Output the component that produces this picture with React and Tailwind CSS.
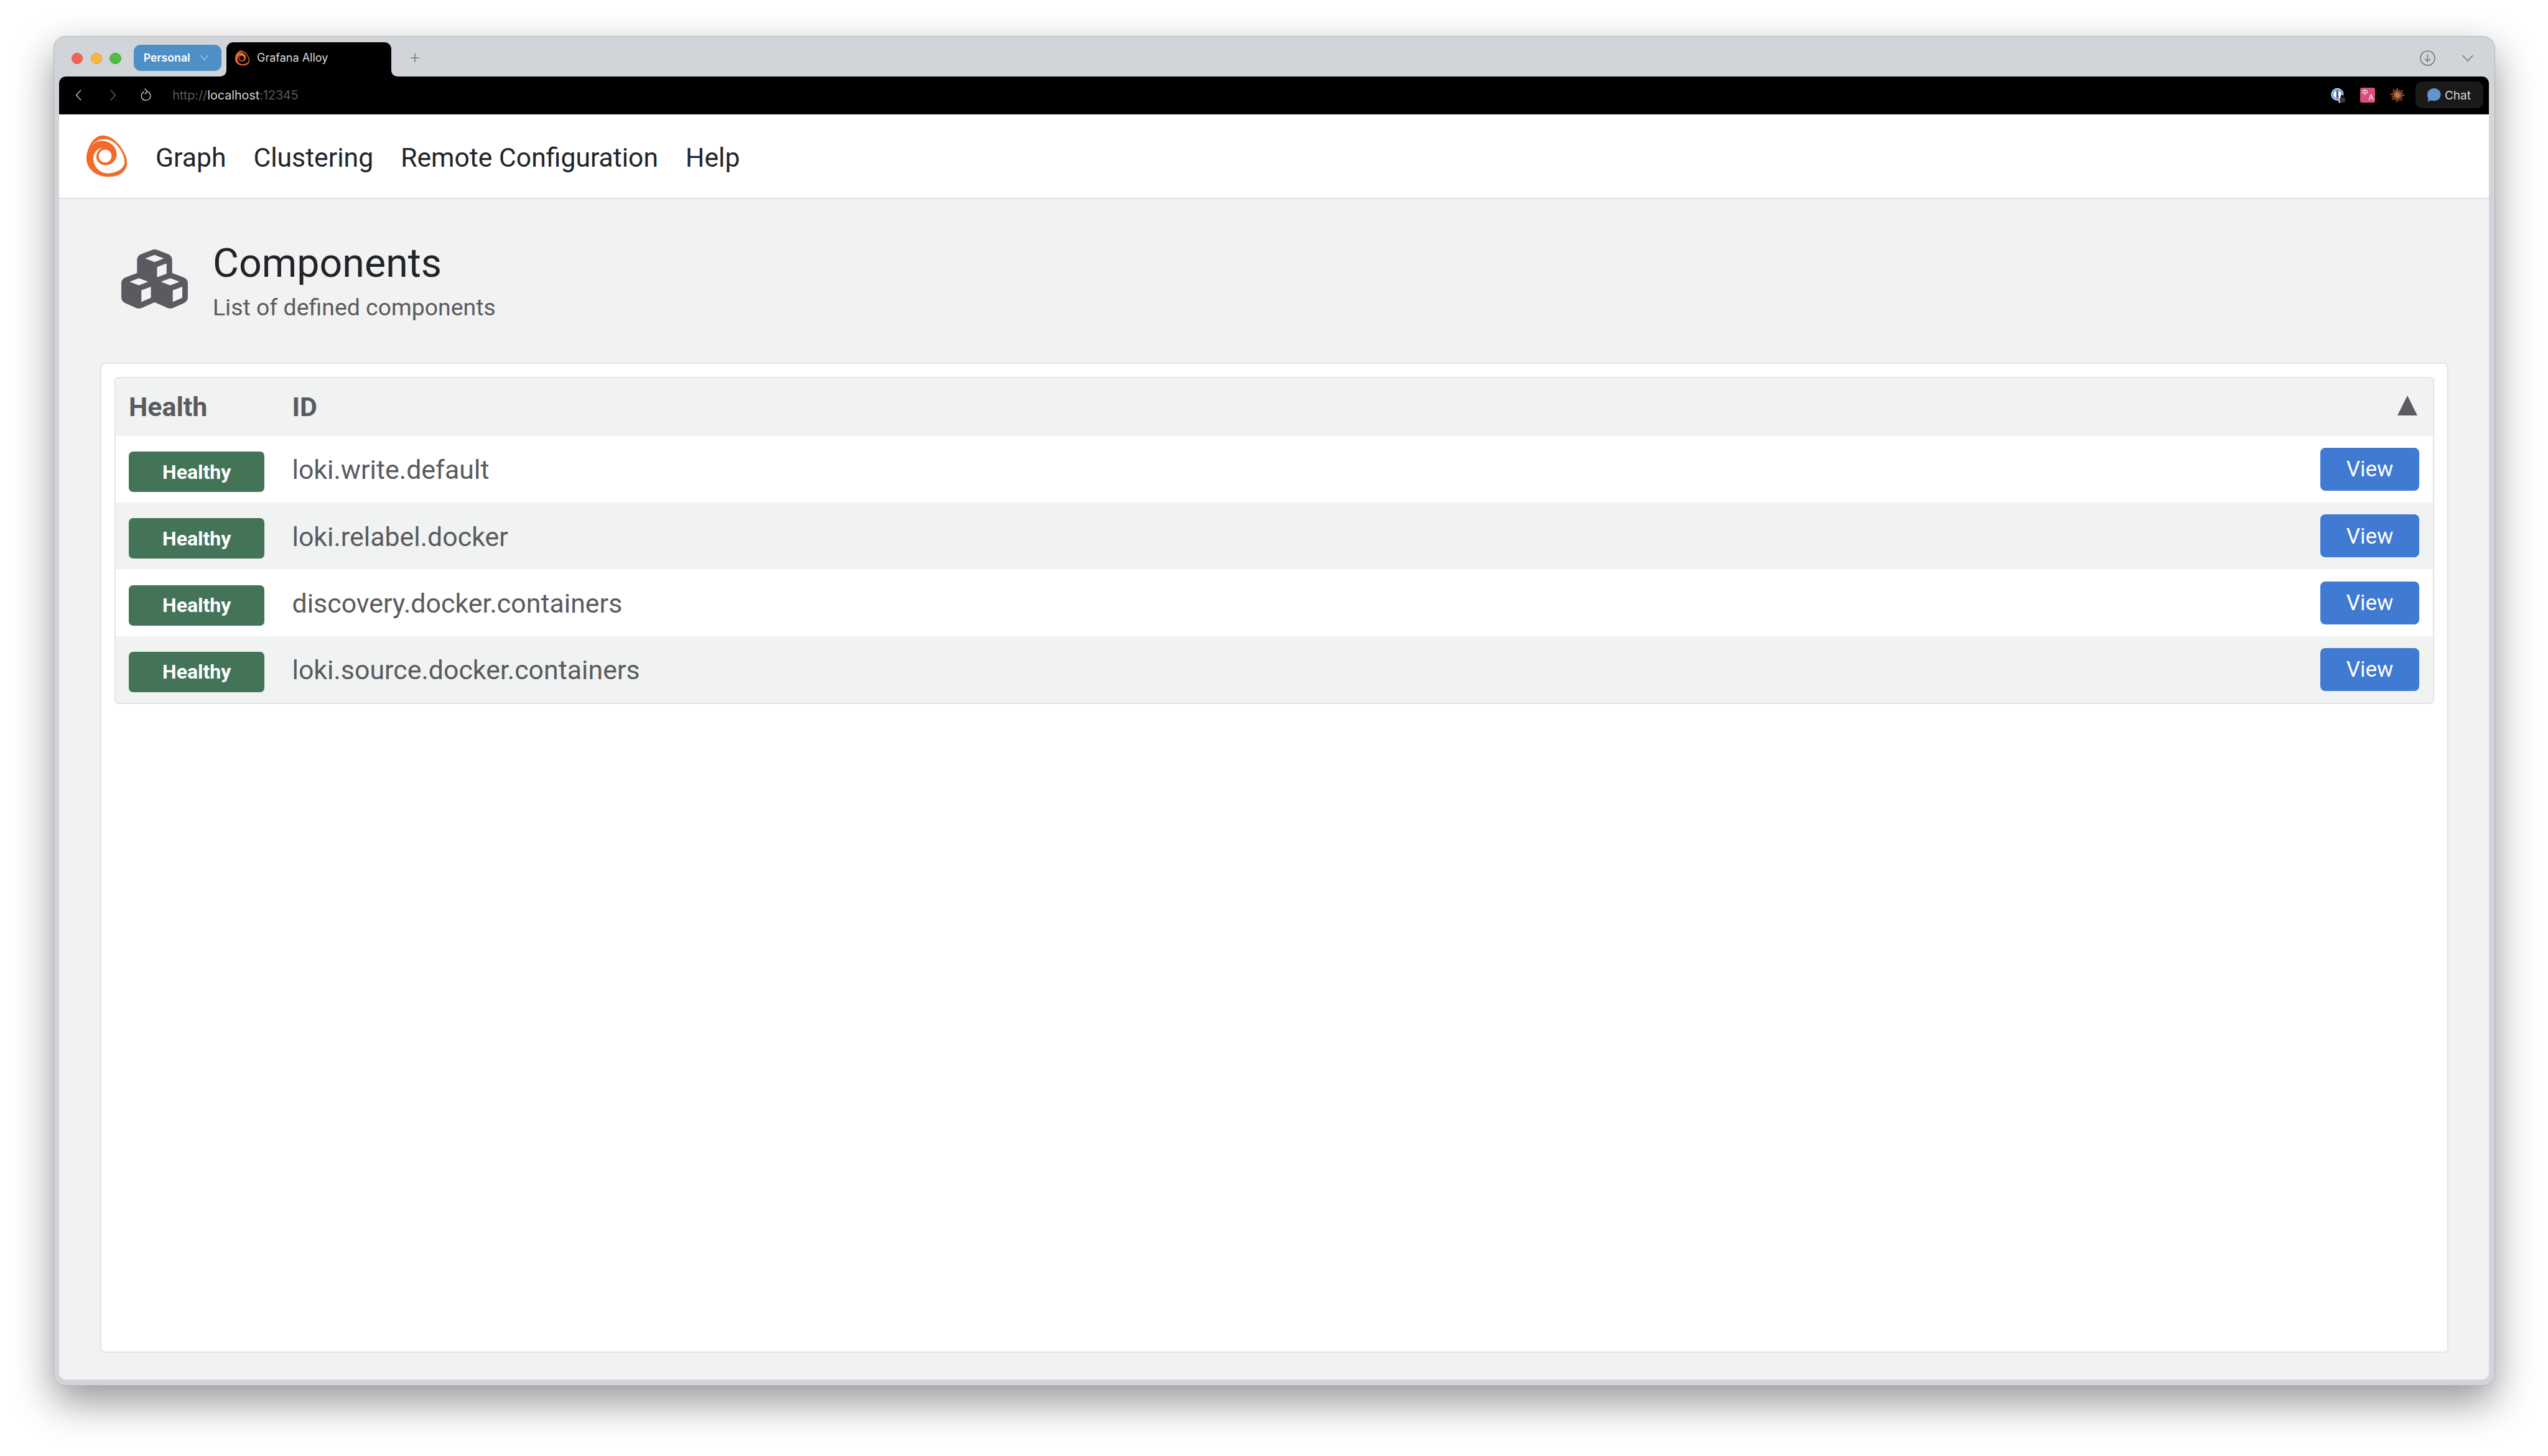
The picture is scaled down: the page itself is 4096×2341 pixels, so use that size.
import React from "react";
import { FaCubes } from "react-icons/fa6";

function AlloyLogo({ className, hole }) {
  return (
    <svg viewBox="40 30 280 285" className={className}>
      <path d="M150 37C215 35 270 95 300 160C325 215 315 270 260 295C210 318 130 312 85 270C50 238 38 190 55 140C70 90 100 42 150 37Z" fill="#f26b2a" />
      <path d="M78 112C105 62 165 48 215 75C265 105 300 175 297 215C292 262 235 285 180 285C130 282 95 240 93 190C92 155 115 122 155 117C125 128 110 155 113 185C118 215 150 238 185 232C225 225 250 185 245 150C240 110 205 78 155 72C120 70 95 85 78 112Z" fill={hole} />
      <circle cx="170" cy="172" r="42" fill={hole} />
    </svg>
  );
}

function Flare({ side }) {
  return (
    <svg
      viewBox="0 0 11 11"
      className={side === "left" ? "absolute bottom-0 left-[-11px] h-[11px] w-[11px]" : "absolute bottom-0 right-[-11px] h-[11px] w-[11px]"}
    >
      <path d={side === "left" ? "M11 0V11H0C7 11 11 7 11 0Z" : "M0 0V11H11C4 11 0 7 0 0Z"} fill="#000" />
    </svg>
  );
}

function OnePassword() {
  return (
    <svg viewBox="0 0 30 30" className="h-[24px] w-[24px]">
      <circle cx="13" cy="13.5" r="12.5" fill="#fff" />
      <circle cx="13" cy="13.5" r="9.5" fill="none" stroke="#4b97f2" strokeWidth="3" />
      <rect x="11" y="6" width="4" height="15" rx="1" fill="#555" />
      <rect x="15.5" y="15" width="14" height="15" fill="#000" />
      <rect x="15.500" y="15" width="5" height="15" fill="#fff" />
      <rect x="17.5" y="20" width="11" height="9.5" rx="2" fill="#3a3a3a" />
      <path d="M20 20v-2a3 3 0 0 1 6 0v2" fill="none" stroke="#3a3a3a" strokeWidth="1.6" />
    </svg>
  );
}

function Spark() {
  const rays = [0, 24, 47, 70, 92, 115, 140, 163, 186, 208, 232, 255, 278, 300, 322, 342];
  return (
    <svg viewBox="-16 -16 32 32" className="h-[24px] w-[24px]">
      {rays.map((a, i) => (
        <line key={a} x1="0" y1="0" x2="0" y2={i % 2 ? -12.5 : -15.5} transform={`rotate(${a})`} stroke="#cc7350" strokeWidth="1.9" />
      ))}
      <circle r="5" fill="#cc7350" />
    </svg>
  );
}

const rows = [
  "loki.write.default",
  "loki.relabel.docker",
  "discovery.docker.containers",
  "loki.source.docker.containers",
];

export default function App() {
  return (
    <div className="h-[2341px] w-[4096px] overflow-hidden bg-white pl-[85.8px] pt-[57.5px] font-['Roboto',sans-serif]">
      <div className="flex h-[2170px] w-[3925.4px] flex-col rounded-[19px] border border-[#b3b5b7] bg-[#d1d5d9] shadow-[0_26px_65px_rgba(0,0,0,0.42)]">
        {/* tab strip */}
        <div className="flex h-[64.2px] shrink-0 items-end pl-[28.2px] pr-[34px] font-['Inter',sans-serif]">
          <div className="mb-[19.5px] flex gap-[12.25px] self-end">
            <span className="h-[18.4px] w-[18.4px] rounded-full border border-[#d9534c] bg-[#f0645a]" />
            <span className="h-[18.4px] w-[18.4px] rounded-full border border-[#dc9c30] bg-[#f9b63b]" />
            <span className="h-[18.4px] w-[18.4px] rounded-full border border-[#45a63a] bg-[#52bd45]" />
          </div>
          <div className="mb-[9.2px] ml-[20.7px] flex h-[41.4px] w-[140.3px] items-center rounded-[11px] bg-[#4e90c5] pl-[15.5px] text-[17.7px] font-semibold text-white">
            Personal
            <svg viewBox="0 0 16 10" className="ml-[15px] h-[9px] w-[15px]">
              <path d="M1 1l7 8 7-8" fill="none" stroke="#a3c8e4" strokeWidth="1.6" />
            </svg>
          </div>
          <div className="relative ml-[8.4px] flex h-[55.2px] w-[265px] items-start rounded-t-[11px] bg-black pl-[13px] pt-[13.5px] text-[18px] text-[#d9dadb]">
            <Flare side="left" />
            <Flare side="right" />
            <AlloyLogo className="h-[25px] w-[25px]" hole="#000" />
            <span className="ml-[11px] leading-[24px]">Grafana Alloy</span>
          </div>
          <svg viewBox="0 0 14 14" className="mb-[23px] ml-[30.5px] h-[14px] w-[14px]">
            <path d="M7 0v14M0 7h14" stroke="#73777b" strokeWidth="1.5" />
          </svg>
          <svg viewBox="0 0 26 26" className="mb-[17px] ml-auto h-[25px] w-[25px]">
            <circle cx="13" cy="13" r="12" fill="none" stroke="#6f7377" strokeWidth="1.6" />
            <path d="M13 6.5v12M8.5 14l4.5 4.5 4.5-4.5" fill="none" stroke="#6f7377" strokeWidth="1.5" />
          </svg>
          <svg viewBox="0 0 20 12" className="mb-[24px] ml-[43px] h-[11px] w-[18px]">
            <path d="M1 1l9 10 9-10" fill="none" stroke="#6f7377" strokeWidth="1.7" />
          </svg>
        </div>

        <div className="mb-[8.2px] ml-[8.2px] mr-[9.2px] flex min-h-0 flex-1 flex-col overflow-hidden rounded-[11px] bg-[#f2f2f2]">
          {/* toolbar */}
          <div className="flex h-[61.3px] shrink-0 items-center border-b border-[#1a1a1a] bg-black pl-[24.7px] pr-[9.2px] font-['Inter',sans-serif]">
            <svg viewBox="0 0 12 18" className="h-[18px] w-[12px]">
              <path d="M10 1L2.5 9l7.5 8" fill="none" stroke="#cfcfcf" strokeWidth="1.3" />
            </svg>
            <svg viewBox="0 0 12 18" className="ml-[44px] h-[18px] w-[12px]">
              <path d="M2 1l7.5 8L2 17" fill="none" stroke="#6a6a6a" strokeWidth="1.3" />
            </svg>
            <svg viewBox="0 0 17 21" className="ml-[38.8px] h-[21px] w-[17px]">
              <path d="M11.500 5.400A7.300 7.300 0 1 1 6 5.300" fill="none" stroke="#d6d6d6" strokeWidth="1.3" />
              <path d="M6.500 0.700L10.800 5.300L6.800 9.500" fill="none" stroke="#d6d6d6" strokeWidth="1.3" />
            </svg>
            <div className="ml-[33.7px] translate-y-[1px] text-[19.7px] text-[#5a5a5a]">
              http://<span className="text-[#d4d4d4]">localhost</span>:12345
            </div>
            <div className="ml-auto flex items-center">
              <OnePassword />
              <div className="relative ml-[23.5px] h-[24.5px] w-[24px] overflow-hidden rounded-[3px] bg-[#d94f7d] font-['Noto_Sans_CJK_SC',sans-serif] leading-none text-white">
                <span className="absolute left-[2.5px] top-[2px] text-[10px] leading-none">中</span>
                <span className="absolute right-[2.5px] bottom-[2.5px] font-['Inter',sans-serif] text-[12px] leading-none">A</span>
              </div>
              <div className="ml-[23.5px] flex">
                <Spark />
              </div>
              <div className="ml-[17.1px] flex h-[43px] w-[108.9px] items-center rounded-[11px] bg-[#1a1a1a] pl-[18px] text-[19px] text-[#d6d6d6]">
                <svg viewBox="0 0 24 24" className="h-[23px] w-[23px]">
                  <path d="M12.5 1C19 1 23.5 5.500 23.500 11.500S19 22 12.500 22C10.500 22 8.500 21.500 7 20.800C5.500 22 3.500 22.800 1 22.800C2.500 21 2.700 19.500 2.500 18C1.500 16.300 1 14 1 11.500C1 5.500 6 1 12.500 1Z" fill="#6196c9" />
                </svg>
                <span className="ml-[6px] translate-y-[1px]">Chat</span>
              </div>
            </div>
          </div>

          {/* nav */}
          <div className="flex h-[136.4px] shrink-0 items-center border-b-[2.3px] border-[#e2e2e2] bg-white pl-[42.5px] text-[42.7px] text-[#212529]">
            <AlloyLogo className="h-[70px] w-[69px]" hole="#fff" />
            <nav className="ml-[43.5px] flex translate-y-[2px] gap-[44px]">
              <a>Graph</a>
              <a>Clustering</a>
              <a>Remote Configuration</a>
              <a>Help</a>
            </nav>
          </div>

          {/* heading */}
          <div className="flex h-[263px] shrink-0 items-center pl-[99.6px]">
            <FaCubes className="h-[95px] w-[107px] -translate-y-[3px] text-[#5a5b60]" />
            <div className="ml-[40.4px]">
              <div className="text-[64.5px] leading-[75px] text-[#212529]">Components</div>
              <div className="mt-[10px] text-[37.4px] leading-[47px] text-[#5a5b60]">List of defined components</div>
            </div>
          </div>

          {/* card */}
          <div className="mb-[43.7px] ml-[66px] mr-[65px] flex-1 rounded-[8px] border-[2px] border-[#e3e4e4] bg-white p-[21px]">
            <div className="rounded-[6px] border-[2px] border-[#e3e5e5] text-[#5a5b60]">
              <div className="flex h-[92.5px] items-center bg-[#f1f3f2] pl-[21px] pr-[25px] text-[42.9px] font-bold">
                <span className="w-[262.5px]">Health</span>
                <span>ID</span>
                <svg viewBox="0 0 32 32" className="ml-auto h-[32px] w-[32px] -translate-y-[3px]">
                  <path d="M16 0L32 32H0Z" fill="#5a5b60" />
                </svg>
              </div>
              {rows.map((r, i) => (
                <div key={r} className={i % 2 ? "flex h-[107.3px] items-center bg-[#f1f3f2] pl-[21px] pr-[21.8px]" : "flex h-[107.3px] items-center bg-white pl-[21px] pr-[21.8px]"}>
                  <span className="flex h-[65px] w-[218.5px] shrink-0 translate-y-[4px] items-center justify-center rounded-[7px] bg-[#437458] text-[32px] font-bold text-white">
                    Healthy
                  </span>
                  <span className="ml-[44px] translate-y-[1px] text-[42.9px]">{r}</span>
                  <button className="ml-auto flex h-[69px] w-[159.4px] items-center justify-center rounded-[8px] bg-[#407ad2] text-[35px] text-white">
                    <span className="translate-y-[1px]">View</span>
                  </button>
                </div>
              ))}
            </div>
          </div>
        </div>
      </div>
    </div>
  );
}
